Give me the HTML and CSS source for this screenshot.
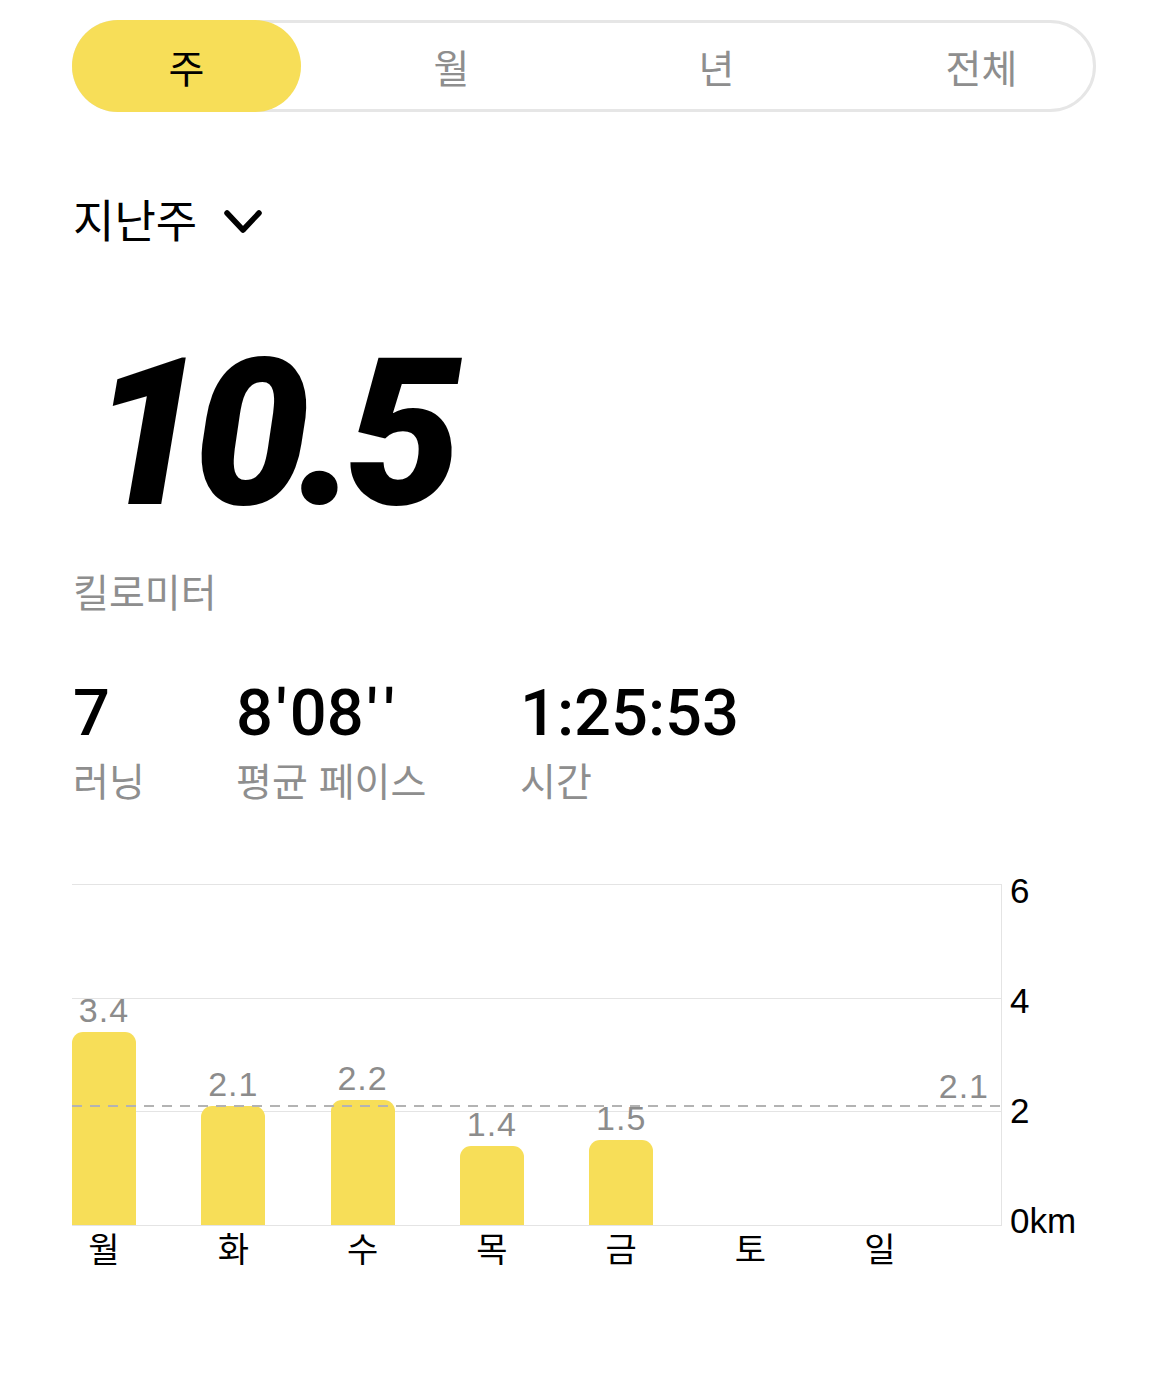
FILE: index.html
```
<!DOCTYPE html>
<html lang="ko">
<head>
<meta charset="utf-8">
<link rel="stylesheet" href="styles.css">
</head>
<body>
<div class="page">
  <div class="segment">
    <div class="seg-item active">주</div>
    <div class="seg-item">월</div>
    <div class="seg-item">년</div>
    <div class="seg-item">전체</div>
  </div>

  <div class="period">
    <span class="period-text">지난주</span>
    <svg class="chevron" width="40" height="28" viewBox="0 0 40 28"><path d="M4 5 L20 22 L36 5" fill="none" stroke="#000" stroke-width="5.5" stroke-linecap="round" stroke-linejoin="round"/></svg>
  </div>

  <div class="big-number">10.5</div>
  <div class="unit">킬로미터</div>

  <div class="stats">
    <div class="stat">
      <div class="stat-value">7</div>
      <div class="stat-label">러닝</div>
    </div>
    <div class="stat">
      <div class="stat-value">8<span class="q">'</span>08<span class="q">'</span><span class="q">'</span></div>
      <div class="stat-label">평균 페이스</div>
    </div>
    <div class="stat">
      <div class="stat-value">1:25:53</div>
      <div class="stat-label">시간</div>
    </div>
  </div>

  <div class="chart">
    <div class="chart-main">
      <div class="plot">
        <div class="bars">
          <div class="col"><span class="val">3.4</span><div class="bar" style="height:193px"></div></div>
          <div class="col"><span class="val">2.1</span><div class="bar" style="height:119px"></div></div>
          <div class="col"><span class="val">2.2</span><div class="bar" style="height:125px"></div></div>
          <div class="col"><span class="val">1.4</span><div class="bar" style="height:79px"></div></div>
          <div class="col"><span class="val">1.5</span><div class="bar" style="height:85px"></div></div>
          <div class="col"></div>
          <div class="col"></div>
        </div>
        <div class="avg-line" style="bottom:118px"></div>
        <div class="avg-label" style="bottom:122px">2.1</div>
      </div>
      <div class="days">
        <span class="day">월</span>
        <span class="day">화</span>
        <span class="day">수</span>
        <span class="day">목</span>
        <span class="day">금</span>
        <span class="day">토</span>
        <span class="day">일</span>
      </div>
    </div>
    <div class="axis">
      <span>6</span>
      <span>4</span>
      <span>2</span>
      <span>0km</span>
    </div>
  </div>
</div>
</body>
</html>
```

FILE: styles.css
```
* { box-sizing: border-box; }
html, body { margin: 0; padding: 0; background: #fff; }
body {
  font-family: "Noto Sans CJK KR", "Noto Sans", sans-serif;
  color: #000;
}
.page {
  padding: 20px 0 0 72px;
  width: 1170px;
}

/* segmented control */
.segment {
  width: 1024px;
  height: 92px;
  border: 3px solid #e6e6e6;
  border-radius: 46px;
  display: flex;
  justify-content: space-between;
  align-items: stretch;
}
.seg-item {
  width: 229px;
  margin: -3px 0;
  display: flex;
  align-items: center;
  justify-content: center;
  font-size: 39px;
  color: #8e8e8e;
  border-radius: 46px;
}
.seg-item:first-child { margin-left: -3px; }
.seg-item:last-child { margin-right: -3px; }
.seg-item.active {
  background: #f7de58;
  color: #000;
}

/* period */
.period {
  margin-top: 81px;
  display: flex;
  align-items: center;
  height: 52px;
  padding-left: 1px;
}
.period-text {
  font-size: 45px;
  line-height: 52px;
}
.chevron {
  margin-left: 26px;
  margin-top: 6px;
}

/* big number */
.big-number {
  margin-top: 85px;
  padding-left: 18px;
  font-family: Roboto, "Liberation Sans", sans-serif;
  font-weight: 900;
  font-style: italic;
  font-size: 206px;
  line-height: 208px;
  letter-spacing: -12px;
}
.unit {
  margin-top: 30px;
  font-size: 39px;
  line-height: 44px;
  color: #8e8e8e;
  padding-left: 1px;
}

/* stats */
.stats {
  margin-top: 69px;
  display: grid;
  grid-template-columns: 163px 284px auto;
  padding-left: 1px;
}
.stat-value {
  font-family: Roboto, "Liberation Sans", sans-serif;
  font-weight: 500;
  font-size: 65px;
  line-height: 65px;
  white-space: nowrap;
}
.stat-value .q {
  margin: 0 3px;
}
.stat-label {
  margin-top: 11px;
  font-size: 39px;
  line-height: 44px;
  color: #8e8e8e;
  white-space: nowrap;
}

/* chart */
.chart {
  margin-top: 83px;
  display: flex;
  align-items: flex-start;
}
.chart-main {
  width: 930px;
}
.plot {
  position: relative;
  height: 342px;
  border-top: 1px solid #e4e4e4;
  border-right: 1px solid #e4e4e4;
  border-bottom: 1px solid #e4e4e4;
  background:
    linear-gradient(#e4e4e4, #e4e4e4) 0 113px / 100% 1px no-repeat,
    linear-gradient(#e4e4e4, #e4e4e4) 0 226px / 100% 1px no-repeat;
}
.bars {
  height: 100%;
  display: flex;
  align-items: flex-end;
  gap: 65.3px;
}
.col {
  width: 64px;
  display: flex;
  flex-direction: column;
  align-items: center;
  justify-content: flex-end;
}
.val {
  font-family: "Liberation Sans", Arial, sans-serif;
  font-size: 34px;
  line-height: 34px;
  color: #8c8c8c;
  margin-bottom: 5px;
  white-space: nowrap;
  letter-spacing: 1px;
}
.bar {
  width: 64px;
  background: #f7de58;
  border-radius: 11px 11px 0 0;
}
.avg-line {
  position: absolute;
  left: 0;
  right: 0;
  height: 2px;
  background: repeating-linear-gradient(90deg, #b3b3b3 0 10px, transparent 10px 18px);
}
.avg-label {
  position: absolute;
  right: 12px;
  font-family: "Liberation Sans", Arial, sans-serif;
  font-size: 34px;
  line-height: 34px;
  color: #8c8c8c;
  letter-spacing: 1px;
}
.days {
  display: flex;
  gap: 65.3px;
}
.day {
  width: 64px;
  text-align: center;
  font-size: 34px;
  line-height: 44px;
  white-space: nowrap;
}
.axis {
  margin-left: 8px;
  margin-top: -13px;
  height: 370px;
  display: flex;
  flex-direction: column;
  justify-content: space-between;
  font-family: "Liberation Sans", Arial, sans-serif;
  font-size: 35px;
  line-height: 40px;
}
```
